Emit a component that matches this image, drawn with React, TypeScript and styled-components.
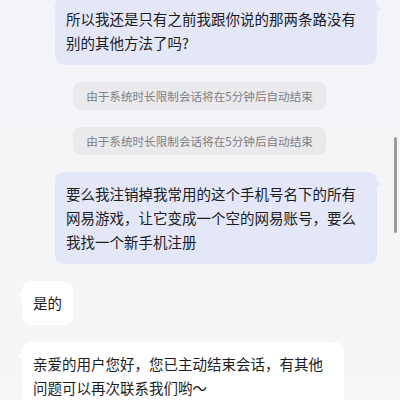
import styled, { createGlobalStyle } from 'styled-components'

const GlobalStyle = createGlobalStyle`
  html, body {
    margin: 0;
    padding: 0;
    background: #f5f5f7;
  }
  body {
    font-family: "Noto Sans CJK SC", "Noto Sans", sans-serif;
  }
`

interface Message {
  kind: 'user' | 'agent' | 'system'
  text: string
}

const messages: Message[] = [
  { kind: 'user', text: '所以我还是只有之前我跟你说的那两条路没有别的其他方法了吗?' },
  { kind: 'system', text: '由于系统时长限制会话将在5分钟后自动结束' },
  { kind: 'system', text: '由于系统时长限制会话将在5分钟后自动结束' },
  {
    kind: 'user',
    text: '要么我注销掉我常用的这个手机号名下的所有网易游戏，让它变成一个空的网易账号，要么我找一个新手机注册',
  },
  { kind: 'agent', text: '是的' },
  { kind: 'agent', text: '亲爱的用户您好，您已主动结束会话，有其他问题可以再次联系我们哟～' },
]

const Screen = styled.div`
  position: relative;
  width: 400px;
  height: 400px;
  overflow: hidden;
  background: linear-gradient(180deg, #f3f4f9 0%, #f5f5f7 45%, #f6f6f6 100%);
`

const Thread = styled.div`
  display: flex;
  flex-direction: column;
  gap: 17px;
  padding: 0 23px 0 22px;
  margin-top: -3px;
`

const Row = styled.div<{ side: 'left' | 'right' | 'center' }>`
  display: flex;
  justify-content: ${p =>
    p.side === 'left' ? 'flex-start' : p.side === 'right' ? 'flex-end' : 'center'};
`

const Bubble = styled.div<{ mine?: boolean }>`
  position: relative;
  max-width: 322px;
  box-sizing: border-box;
  padding: 10px 11px;
  border-radius: 9px;
  font-size: 14.5px;
  line-height: 24px;
  color: #1c1c1e;
  background: ${p => (p.mine ? '#e3e7f8' : '#ffffff')};

  &::before {
    content: '';
    position: absolute;
    top: ${p => (p.mine ? '9px' : '11px')};
    ${p => (p.mine ? 'right: -5px;' : 'left: -5px;')}
    border-top: 3px solid transparent;
    border-bottom: 3px solid transparent;
    ${p =>
      p.mine
        ? 'border-left: 6px solid #e3e7f8;'
        : 'border-right: 6px solid #ffffff;'}
  }
`

const Notice = styled.div`
  padding: 0 13px;
  height: 28px;
  line-height: 28px;
  border-radius: 8px;
  background: #eaeaed;
  color: #808085;
  font-size: 11.6px;
  white-space: nowrap;
`

const ScrollThumb = styled.div`
  position: absolute;
  right: 3px;
  top: 137px;
  width: 3px;
  height: 96px;
  border-radius: 2px;
  background: #9a9a9d;
`

export default function App() {
  return (
    <>
      <GlobalStyle />
      <Screen>
        <Thread>
          {messages.map((m, i) => {
            if (m.kind === 'system') {
              return (
                <Row key={i} side="center">
                  <Notice>{m.text}</Notice>
                </Row>
              )
            }
            return (
              <Row key={i} side={m.kind === 'user' ? 'right' : 'left'}>
                <Bubble mine={m.kind === 'user'}>{m.text}</Bubble>
              </Row>
            )
          })}
        </Thread>
        <ScrollThumb />
      </Screen>
    </>
  )
}
